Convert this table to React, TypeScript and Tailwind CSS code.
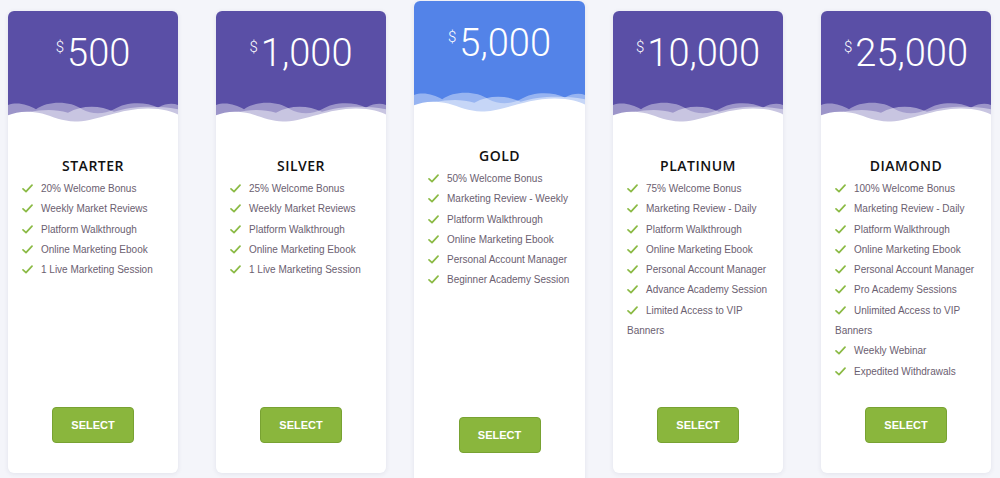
import React from "react";

type Plan = {
  price: string;
  name: string;
  features: string[];
  featured?: boolean;
};

const plans: Plan[] = [
  {
    price: "500",
    name: "STARTER",
    features: ["20% Welcome Bonus", "Weekly Market Reviews", "Platform Walkthrough", "Online Marketing Ebook", "1 Live Marketing Session"],
  },
  {
    price: "1,000",
    name: "SILVER",
    features: ["25% Welcome Bonus", "Weekly Market Reviews", "Platform Walkthrough", "Online Marketing Ebook", "1 Live Marketing Session"],
  },
  {
    price: "5,000",
    name: "GOLD",
    featured: true,
    features: [
      "50% Welcome Bonus",
      "Marketing Review - Weekly",
      "Platform Walkthrough",
      "Online Marketing Ebook",
      "Personal Account Manager",
      "Beginner Academy Session",
    ],
  },
  {
    price: "10,000",
    name: "PLATINUM",
    features: [
      "75% Welcome Bonus",
      "Marketing Review - Daily",
      "Platform Walkthrough",
      "Online Marketing Ebook",
      "Personal Account Manager",
      "Advance Academy Session",
      "Limited Access to VIP Banners",
    ],
  },
  {
    price: "25,000",
    name: "DIAMOND",
    features: [
      "100% Welcome Bonus",
      "Marketing Review - Daily",
      "Platform Walkthrough",
      "Online Marketing Ebook",
      "Personal Account Manager",
      "Pro Academy Sessions",
      "Unlimited Access to VIP Banners",
      "Weekly Webinar",
      "Expedited Withdrawals",
    ],
  },
];

function Waves() {
  return (
    <svg className="absolute bottom-0 left-0 w-full h-[26px]" viewBox="0 0 170 30" preserveAspectRatio="none">
      <path
        d="M0 8 C 10 4, 20 8, 28 13 C 40 3, 62 3, 74 13 C 84 19, 96 19, 106 13 C 118 4, 138 4, 150 11 C 158 6, 165 6, 170 8 L170 30 L0 30 Z"
        fill="#ffffff"
        fillOpacity="0.4"
      />
      <path
        d="M0 22 C 20 16, 40 10, 60 17 C 74 8, 92 8, 106 16 C 122 10, 145 8, 170 13 L170 30 L0 30 Z"
        fill="#ffffff"
        fillOpacity="0.45"
      />
      <path
        d="M0 20 C 8 16, 20 14, 34 18 C 46 22, 56 28, 70 27 C 90 26, 112 12, 140 12 C 155 12, 165 16, 170 19 L170 30 L0 30 Z"
        fill="#ffffff"
      />
    </svg>
  );
}

function Check() {
  return (
    <svg className="inline-block w-[11px] h-[9px] mr-[8px] align-[-1px]" viewBox="0 0 11 9">
      <path d="M1 4.8 L4 7.6 L10 1.2" fill="none" stroke="#8bba45" strokeWidth="1.7" strokeLinecap="round" strokeLinejoin="round" />
    </svg>
  );
}

function Card({ plan }: { plan: Plan }) {
  return (
    <div
      className={`flex flex-col shrink-0 bg-white rounded-[6px] overflow-hidden shadow-[0_1px_5px_rgba(40,40,90,0.09)] ${
        plan.featured ? "w-[171px] h-[482px] mt-[1px]" : "w-[170px] h-[462px] mt-[11px]"
      }`}
    >
      <div className={`relative h-[113px] ${plan.featured ? "bg-[#5383e8]" : "bg-[#5a4fa6]"}`}>
        <div className="flex justify-center items-start pt-[23px] text-white font-['Roboto',sans-serif] font-light">
          <span className="text-[15px] leading-none mt-[6px] mr-[3px]">$</span>
          <span className="text-[38px] leading-none">{plan.price}</span>
        </div>
        <Waves />
      </div>
      <h3 className="mt-[33px] text-center text-[14px] leading-[18px] font-semibold tracking-[0.5px] text-[#111] font-['Open_Sans',sans-serif]">
        {plan.name}
      </h3>
      <ul className="mt-[4px] pl-[14px] pr-[2px] font-['Liberation_Sans',Arial,sans-serif] text-[10px] leading-[20.3px] text-[#6b6070]">
        {plan.features.map((f) => (
          <li key={f}>
            <Check />
            {f}
          </li>
        ))}
      </ul>
      <div className="mt-auto pb-[30px] flex justify-center">
        <button className="w-[82px] h-[36px] rounded-[4px] bg-[#8ab63d] border border-[#78a232] text-white text-[11px] font-bold font-['Liberation_Sans',Arial,sans-serif]">
          SELECT
        </button>
      </div>
    </div>
  );
}

export default function App() {
  return (
    <div className="w-[1000px] h-[478px] overflow-hidden bg-[#f4f5fa]">
      <div className="flex items-start pl-[8px]">
        <Card plan={plans[0]} />
        <div className="ml-[38px]">
          <Card plan={plans[1]} />
        </div>
        <div className="ml-[28px]">
          <Card plan={plans[2]} />
        </div>
        <div className="ml-[28px]">
          <Card plan={plans[3]} />
        </div>
        <div className="ml-[38px]">
          <Card plan={plans[4]} />
        </div>
      </div>
    </div>
  );
}
